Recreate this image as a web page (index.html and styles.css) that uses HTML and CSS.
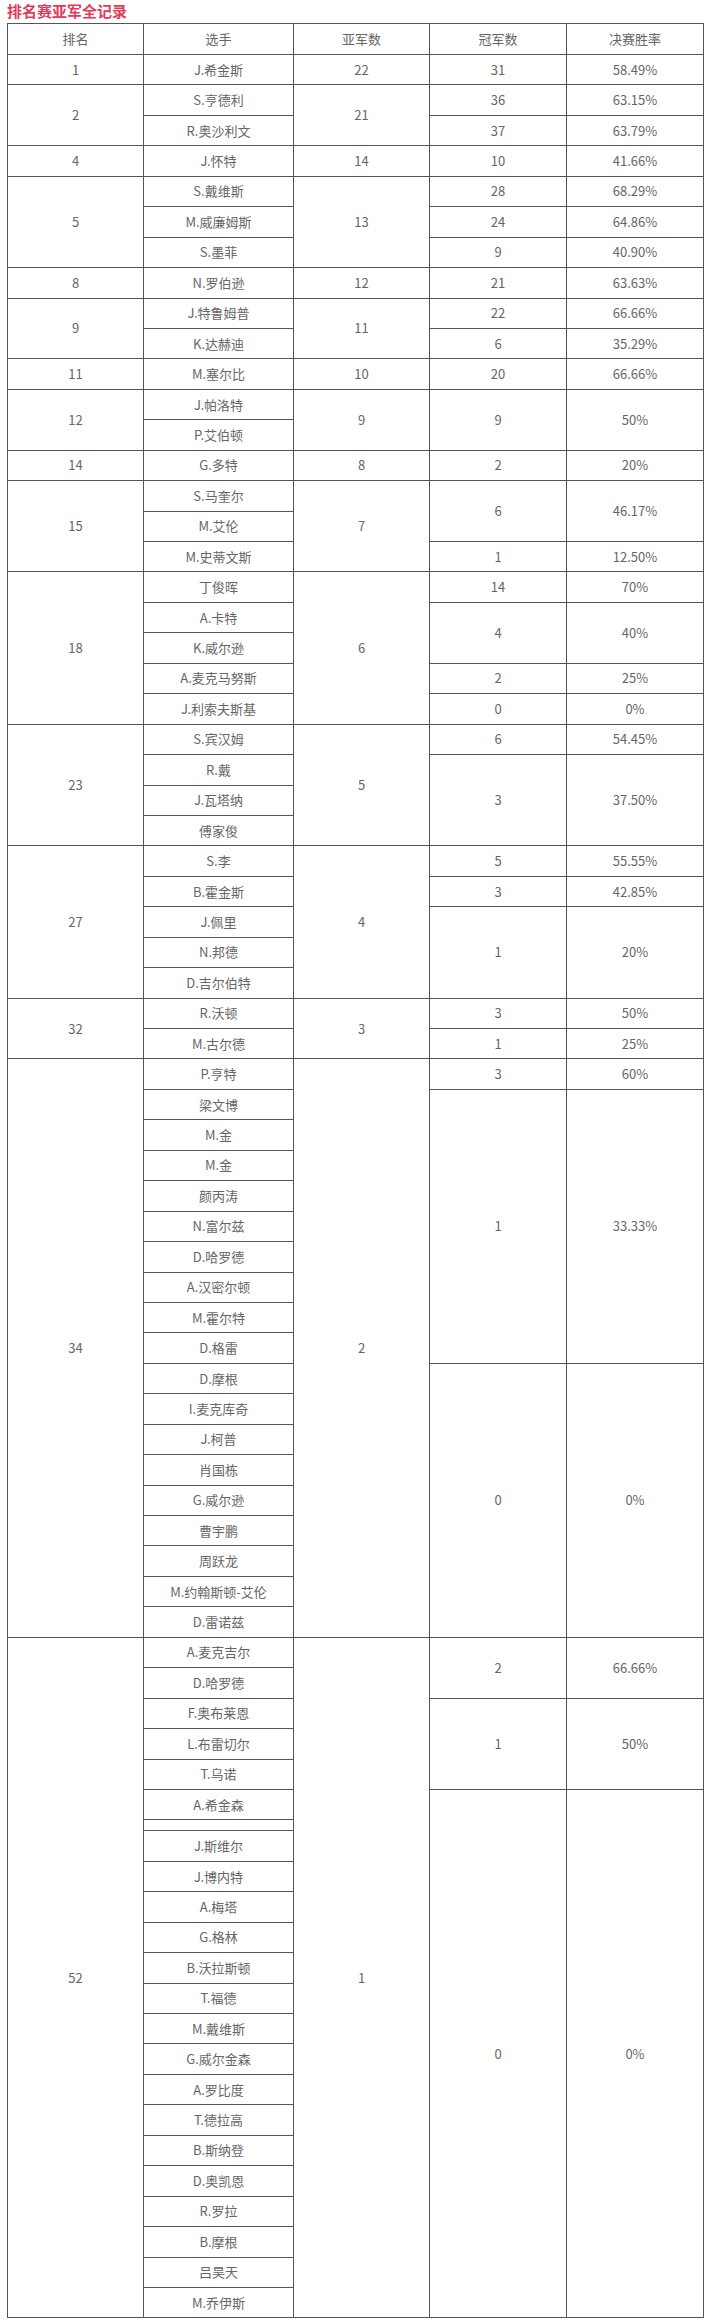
FILE: index.html
```html
<!DOCTYPE html>
<html lang="zh-CN">
<head>
<meta charset="utf-8">
<title>排名赛亚军全记录</title>
<link rel="stylesheet" href="styles.css">
</head>
<body>
<div class="title">排名赛亚军全记录</div>
<table class="record">
<colgroup><col class="c-rank"><col class="c-player"><col class="c-runner"><col class="c-champ"><col class="c-rate"></colgroup>
<thead>
<tr class="head"><td>排名</td><td>选手</td><td>亚军数</td><td>冠军数</td><td>决赛胜率</td></tr>
</thead>
<tbody>
<tr><td>1</td><td>J.希金斯</td><td>22</td><td>31</td><td>58.49%</td></tr>
<tr><td rowspan="2">2</td><td>S.亨德利</td><td rowspan="2">21</td><td>36</td><td>63.15%</td></tr>
<tr><td>R.奥沙利文</td><td>37</td><td>63.79%</td></tr>
<tr><td>4</td><td>J.怀特</td><td>14</td><td>10</td><td>41.66%</td></tr>
<tr><td rowspan="3">5</td><td>S.戴维斯</td><td rowspan="3">13</td><td>28</td><td>68.29%</td></tr>
<tr><td>M.威廉姆斯</td><td>24</td><td>64.86%</td></tr>
<tr><td>S.墨菲</td><td>9</td><td>40.90%</td></tr>
<tr><td>8</td><td>N.罗伯逊</td><td>12</td><td>21</td><td>63.63%</td></tr>
<tr><td rowspan="2">9</td><td>J.特鲁姆普</td><td rowspan="2">11</td><td>22</td><td>66.66%</td></tr>
<tr><td>K.达赫迪</td><td>6</td><td>35.29%</td></tr>
<tr><td>11</td><td>M.塞尔比</td><td>10</td><td>20</td><td>66.66%</td></tr>
<tr><td rowspan="2">12</td><td>J.帕洛特</td><td rowspan="2">9</td><td rowspan="2">9</td><td rowspan="2">50%</td></tr>
<tr><td>P.艾伯顿</td></tr>
<tr><td>14</td><td>G.多特</td><td>8</td><td>2</td><td>20%</td></tr>
<tr><td rowspan="3">15</td><td>S.马奎尔</td><td rowspan="3">7</td><td rowspan="2">6</td><td rowspan="2">46.17%</td></tr>
<tr><td>M.艾伦</td></tr>
<tr><td>M.史蒂文斯</td><td>1</td><td>12.50%</td></tr>
<tr><td rowspan="5">18</td><td>丁俊晖</td><td rowspan="5">6</td><td>14</td><td>70%</td></tr>
<tr><td>A.卡特</td><td rowspan="2">4</td><td rowspan="2">40%</td></tr>
<tr><td>K.威尔逊</td></tr>
<tr><td>A.麦克马努斯</td><td>2</td><td>25%</td></tr>
<tr><td>J.利索夫斯基</td><td>0</td><td>0%</td></tr>
<tr><td rowspan="4">23</td><td>S.宾汉姆</td><td rowspan="4">5</td><td>6</td><td>54.45%</td></tr>
<tr><td>R.戴</td><td rowspan="3">3</td><td rowspan="3">37.50%</td></tr>
<tr><td>J.瓦塔纳</td></tr>
<tr><td>傅家俊</td></tr>
<tr><td rowspan="5">27</td><td>S.李</td><td rowspan="5">4</td><td>5</td><td>55.55%</td></tr>
<tr><td>B.霍金斯</td><td>3</td><td>42.85%</td></tr>
<tr><td>J.佩里</td><td rowspan="3">1</td><td rowspan="3">20%</td></tr>
<tr><td>N.邦德</td></tr>
<tr><td>D.吉尔伯特</td></tr>
<tr><td rowspan="2">32</td><td>R.沃顿</td><td rowspan="2">3</td><td>3</td><td>50%</td></tr>
<tr><td>M.古尔德</td><td>1</td><td>25%</td></tr>
<tr><td rowspan="19">34</td><td>P.亨特</td><td rowspan="19">2</td><td>3</td><td>60%</td></tr>
<tr><td>梁文博</td><td rowspan="9">1</td><td rowspan="9">33.33%</td></tr>
<tr><td>M.金</td></tr>
<tr><td>M.金</td></tr>
<tr><td>颜丙涛</td></tr>
<tr><td>N.富尔兹</td></tr>
<tr><td>D.哈罗德</td></tr>
<tr><td>A.汉密尔顿</td></tr>
<tr><td>M.霍尔特</td></tr>
<tr><td>D.格雷</td></tr>
<tr><td>D.摩根</td><td rowspan="9">0</td><td rowspan="9">0%</td></tr>
<tr><td>I.麦克库奇</td></tr>
<tr><td>J.柯普</td></tr>
<tr><td>肖国栋</td></tr>
<tr><td>G.威尔逊</td></tr>
<tr><td>曹宇鹏</td></tr>
<tr><td>周跃龙</td></tr>
<tr><td>M.约翰斯顿-艾伦</td></tr>
<tr><td>D.雷诺兹</td></tr>
<tr><td rowspan="23">52</td><td>A.麦克吉尔</td><td rowspan="23">1</td><td rowspan="2">2</td><td rowspan="2">66.66%</td></tr>
<tr><td>D.哈罗德</td></tr>
<tr><td>F.奥布莱恩</td><td rowspan="3">1</td><td rowspan="3">50%</td></tr>
<tr><td>L.布雷切尔</td></tr>
<tr><td>T.乌诺</td></tr>
<tr><td>A.希金森</td><td rowspan="18">0</td><td rowspan="18">0%</td></tr>
<tr class="gap"><td></td></tr>
<tr><td>J.斯维尔</td></tr>
<tr><td>J.博内特</td></tr>
<tr><td>A.梅塔</td></tr>
<tr><td>G.格林</td></tr>
<tr><td>B.沃拉斯顿</td></tr>
<tr><td>T.福德</td></tr>
<tr><td>M.戴维斯</td></tr>
<tr><td>G.威尔金森</td></tr>
<tr><td>A.罗比度</td></tr>
<tr><td>T.德拉高</td></tr>
<tr><td>B.斯纳登</td></tr>
<tr><td>D.奥凯恩</td></tr>
<tr><td>R.罗拉</td></tr>
<tr><td>B.摩根</td></tr>
<tr><td>吕昊天</td></tr>
<tr><td>M.乔伊斯</td></tr>
</tbody>
</table>
</body>
</html>
```
FILE: styles.css
```css
html, body {
  margin: 0;
  padding: 0;
  background: #ffffff;
}
body {
  padding: 1px 7px 0 7px;
  font-family: "Noto Sans CJK SC", "Noto Sans", sans-serif;
  color: #666666;
}
.title {
  font-size: 15px;
  line-height: 20px;
  font-weight: bold;
  color: #e23a58;
  margin: 0 0 2px 0;
}
.record {
  border-collapse: collapse;
  table-layout: fixed;
  width: 696px;
  font-size: 13px;
}
.c-rank { width: 136px; }
.c-player { width: 150px; }
.c-runner { width: 136px; }
.c-champ { width: 137px; }
.c-rate { width: 137px; }
.record td {
  border: 1px solid #555555;
  text-align: center;
  vertical-align: middle;
  padding: 0;
  line-height: 18px;
}
.record tr {
  height: 30.45px;
}
.record tr.head {
  height: 31px;
}
.record tr.gap {
  height: 11px;
}
```
